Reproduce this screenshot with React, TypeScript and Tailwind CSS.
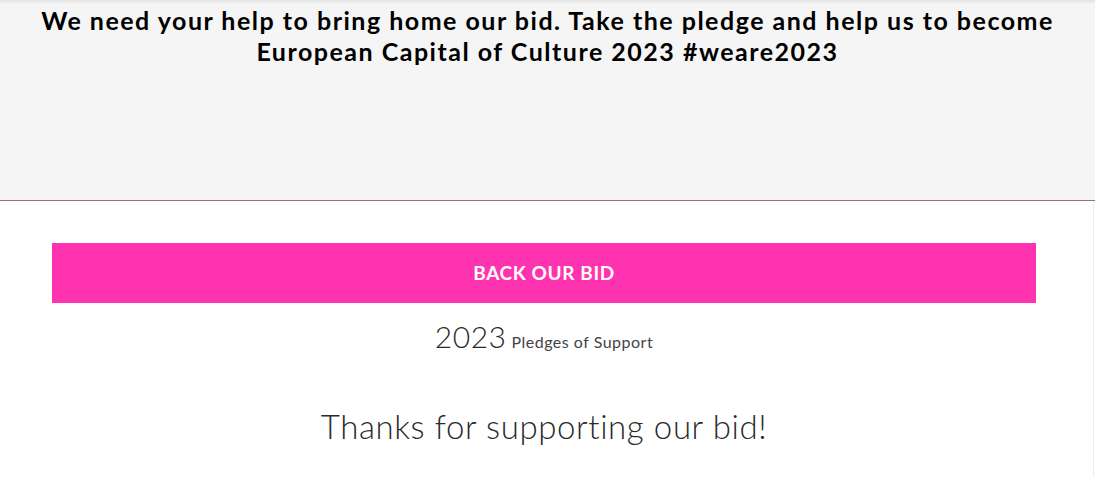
import React from 'react';

const font = { fontFamily: 'Lato, "Open Sans", sans-serif' };

export default function App() {
  return (
    <div className="w-[1095px] h-[477px] overflow-hidden bg-white" style={font}>
      <div className="h-[201px] bg-[#f5f5f5] border-b border-[#a36a94] relative">
        <div className="absolute top-0 left-0 right-0 h-[4px] bg-gradient-to-b from-[#e2e2e2] to-[#f5f5f5]" />
        <h1 className="pt-[5px] text-center text-[25px] leading-[31px] font-bold text-black tracking-[1.5px]">
          We need your help to bring home our bid. Take the pledge and help us to become
          <br />
          European Capital of Culture 2023 #weare2023
        </h1>
      </div>
      <div className="h-[276px] border-r border-[#ececec] mr-[1px] pl-[52px] pt-[42px] pr-[57px]">
        <button className="w-full h-[60px] bg-[#ff33b0] text-white text-[19px] font-bold tracking-[0.6px]">
          BACK OUR BID
        </button>
        <div className="mt-[15px] flex items-baseline justify-center text-[#2a2a2a]">
          <span className="text-[30px] font-light leading-[36px] tracking-[0.5px]">2023</span>
          <span className="ml-[5px] text-[16px] font-normal tracking-[0.5px] text-[#444]">Pledges of Support</span>
        </div>
        <p className="mt-[52px] text-center text-[33px] font-light leading-[40px] text-[#2a2a2a] tracking-[0.6px]">
          Thanks for supporting our bid!
        </p>
      </div>
    </div>
  );
}
